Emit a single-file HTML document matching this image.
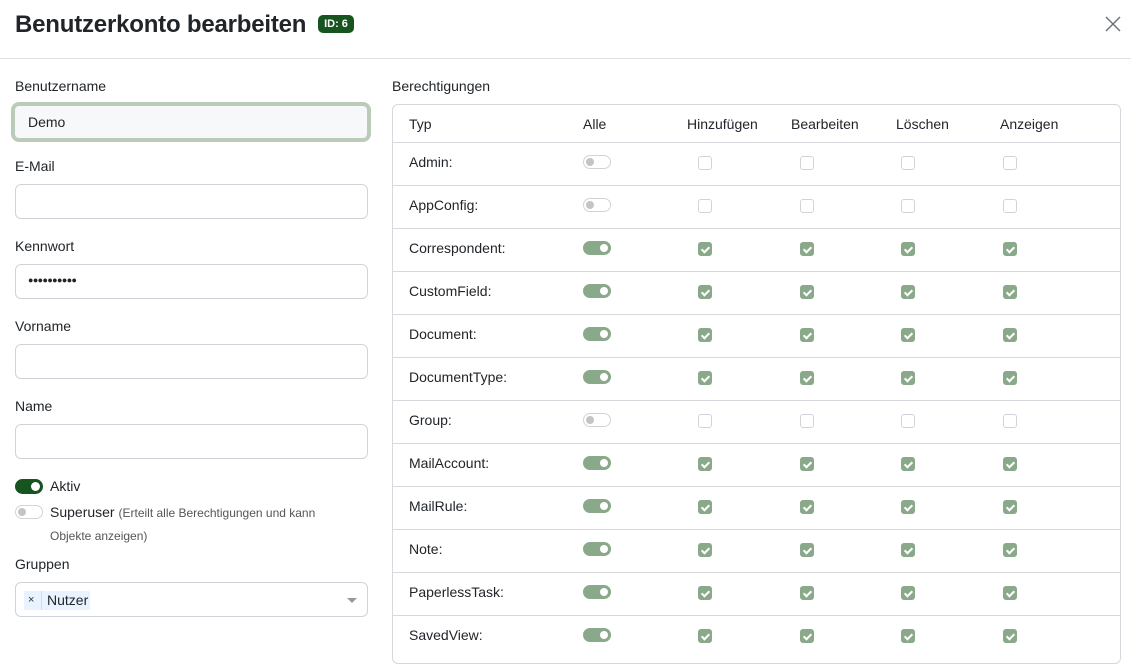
<!DOCTYPE html>
<html><head><meta charset="utf-8"><style>
*{box-sizing:border-box;margin:0;padding:0}
body{width:1131px;height:634px;overflow:hidden;background:#fff;font-family:"Liberation Sans",sans-serif;color:#212529;font-size:14px;position:relative}
.a{position:absolute}
.lbl{position:absolute;left:15px;font-size:14px}
.inp{position:absolute;left:15px;width:353px;height:35px;border:1px solid #ced4da;border-radius:6px;background:#fff}
.tbl{position:absolute;left:392px;top:104px;width:729px;height:560px;border:1px solid #d5d9de;border-radius:6px}
.row{position:absolute;left:0;width:727px;height:43px;border-top:1px solid #d5d9de}
.row span{position:absolute;left:16px;top:11px}
.cb{position:absolute;width:14px;height:14px;border-radius:3px;top:13px;border:1px solid #d0d4d8;background:#fff}
.cb.on{background:#8aa98a;border-color:#8aa98a}
.cb.on::after{content:"";position:absolute;left:3.5px;top:1.5px;width:3px;height:6px;border:solid #fff;border-width:0 2px 2px 0;transform:rotate(45deg)}
.tg{position:absolute;left:190px;top:12px;width:28px;height:14px;border-radius:7px;border:1px solid #d0d4d8;background:#fff}
.tg::after{content:"";position:absolute;left:2px;top:2px;width:8px;height:8px;border-radius:50%;background:#c4c4c4}
.tg.on{background:#8aa98a;border-color:#8aa98a}
.tg.on::after{left:16px;background:#fff}
.h{position:absolute;top:11px}
</style></head><body>
<div class="a" style="left:15px;top:11px;font-size:24px;font-weight:bold;letter-spacing:-0.2px">Benutzerkonto bearbeiten</div>
<div class="a" style="left:318px;top:15px;width:36px;height:18px;background:#17541f;color:#fff;border-radius:5px;font-size:11px;font-weight:bold;text-align:center;line-height:18px">ID: 6</div>
<svg class="a" style="left:1105px;top:16px" width="16" height="16" viewBox="0 0 16 16"><path d="M1 1L15 15M15 1L1 15" stroke="#6c757d" stroke-width="1.5"/></svg>
<div class="a" style="left:0;top:58px;width:1131px;height:1px;background:#dee2e6"></div>

<div class="lbl" style="top:78px">Benutzername</div>
<div class="inp" style="top:102px;left:11px;width:360px;height:40px;border:4px solid #bacbba;background:#f6f8fa;border-radius:8px"><span class="a" style="left:13px;top:8px">Demo</span></div>
<div class="lbl" style="top:158px">E-Mail</div>
<div class="inp" style="top:184px"></div>
<div class="lbl" style="top:238px">Kennwort</div>
<div class="inp" style="top:264px"><span class="a" style="left:12px;top:10px;font-size:9px;letter-spacing:-0.6px">●●●●●●●●●●</span></div>
<div class="lbl" style="top:318px">Vorname</div>
<div class="inp" style="top:344px"></div>
<div class="lbl" style="top:398px">Name</div>
<div class="inp" style="top:424px"></div>

<div class="a" style="left:15px;top:479px;width:28px;height:15px;border-radius:8px;background:#17541f"><div class="a" style="left:16px;top:3px;width:9px;height:9px;border-radius:50%;background:#fff"></div></div>
<div class="a" style="left:50px;top:478px">Aktiv</div>
<div class="a" style="left:15px;top:505px;width:28px;height:14px;border-radius:7px;border:1px solid #d0d4d8"><div class="a" style="left:2px;top:2px;width:8px;height:8px;border-radius:50%;background:#c4c4c4"></div></div>
<div class="a" style="left:50px;top:501px;width:300px;line-height:22px">Superuser <span style="font-size:12px;color:#555">(Erteilt alle Berechtigungen und kann Objekte anzeigen)</span></div>

<div class="lbl" style="top:556px">Gruppen</div>
<div class="inp" style="top:582px"><div class="a" style="left:8px;top:8px;width:66px;height:19px;background:#e8f3ff;border-radius:2px"><span class="a" style="left:4px;top:3px;font-size:11px;color:#333">×</span><div class="a" style="left:17px;top:0;width:1px;height:19px;background:#c2dfff"></div><span class="a" style="left:23px;top:1px;font-size:14px">Nutzer</span></div>
<div class="a" style="left:331px;top:15px;width:0;height:0;border-left:5px solid transparent;border-right:5px solid transparent;border-top:5px solid #999"></div></div>

<div class="a" style="left:392px;top:78px">Berechtigungen</div>
<div class="tbl">
<span class="h" style="left:16px">Typ</span><span class="h" style="left:190px">Alle</span><span class="h" style="left:294px">Hinzufügen</span><span class="h" style="left:398px">Bearbeiten</span><span class="h" style="left:503px">Löschen</span><span class="h" style="left:607px">Anzeigen</span>
<div class="row" style="top:37px"><span>Admin:</span><i class="tg"></i><i class="cb" style="left:305px"></i><i class="cb" style="left:407px"></i><i class="cb" style="left:508px"></i><i class="cb" style="left:610px"></i></div>
<div class="row" style="top:80px"><span>AppConfig:</span><i class="tg"></i><i class="cb" style="left:305px"></i><i class="cb" style="left:407px"></i><i class="cb" style="left:508px"></i><i class="cb" style="left:610px"></i></div>
<div class="row" style="top:123px"><span>Correspondent:</span><i class="tg on"></i><i class="cb on" style="left:305px"></i><i class="cb on" style="left:407px"></i><i class="cb on" style="left:508px"></i><i class="cb on" style="left:610px"></i></div>
<div class="row" style="top:166px"><span>CustomField:</span><i class="tg on"></i><i class="cb on" style="left:305px"></i><i class="cb on" style="left:407px"></i><i class="cb on" style="left:508px"></i><i class="cb on" style="left:610px"></i></div>
<div class="row" style="top:209px"><span>Document:</span><i class="tg on"></i><i class="cb on" style="left:305px"></i><i class="cb on" style="left:407px"></i><i class="cb on" style="left:508px"></i><i class="cb on" style="left:610px"></i></div>
<div class="row" style="top:252px"><span>DocumentType:</span><i class="tg on"></i><i class="cb on" style="left:305px"></i><i class="cb on" style="left:407px"></i><i class="cb on" style="left:508px"></i><i class="cb on" style="left:610px"></i></div>
<div class="row" style="top:295px"><span>Group:</span><i class="tg"></i><i class="cb" style="left:305px"></i><i class="cb" style="left:407px"></i><i class="cb" style="left:508px"></i><i class="cb" style="left:610px"></i></div>
<div class="row" style="top:338px"><span>MailAccount:</span><i class="tg on"></i><i class="cb on" style="left:305px"></i><i class="cb on" style="left:407px"></i><i class="cb on" style="left:508px"></i><i class="cb on" style="left:610px"></i></div>
<div class="row" style="top:381px"><span>MailRule:</span><i class="tg on"></i><i class="cb on" style="left:305px"></i><i class="cb on" style="left:407px"></i><i class="cb on" style="left:508px"></i><i class="cb on" style="left:610px"></i></div>
<div class="row" style="top:424px"><span>Note:</span><i class="tg on"></i><i class="cb on" style="left:305px"></i><i class="cb on" style="left:407px"></i><i class="cb on" style="left:508px"></i><i class="cb on" style="left:610px"></i></div>
<div class="row" style="top:467px"><span>PaperlessTask:</span><i class="tg on"></i><i class="cb on" style="left:305px"></i><i class="cb on" style="left:407px"></i><i class="cb on" style="left:508px"></i><i class="cb on" style="left:610px"></i></div>
<div class="row" style="top:510px"><span>SavedView:</span><i class="tg on"></i><i class="cb on" style="left:305px"></i><i class="cb on" style="left:407px"></i><i class="cb on" style="left:508px"></i><i class="cb on" style="left:610px"></i></div>
</div>
</body></html>
